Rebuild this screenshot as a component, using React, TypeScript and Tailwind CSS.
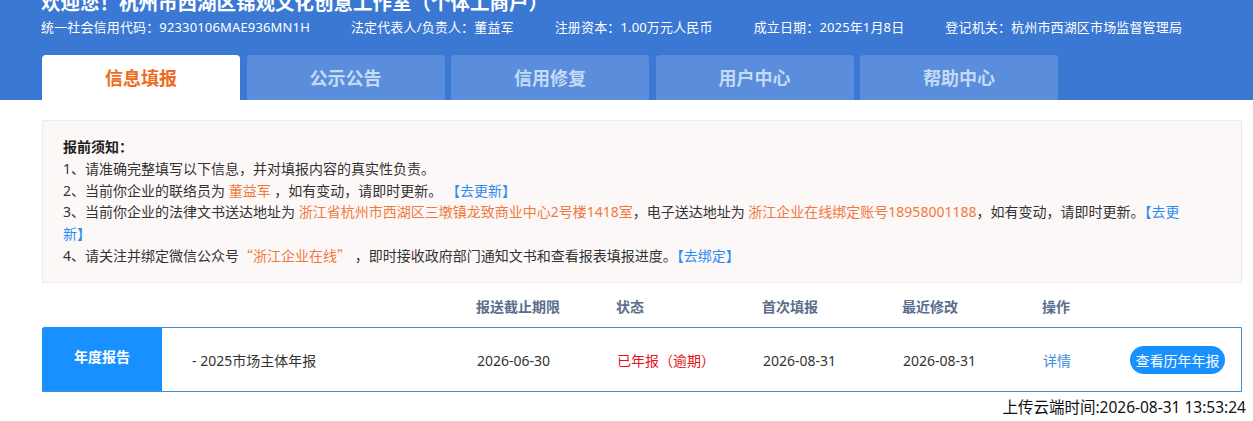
const orange = 'text-[#ef7a3f]'
const link = 'text-[#2d8cf0]'
const cjk = "font-['Noto_Sans_CJK_SC']"

const infoItems = [
  '统一社会信用代码：92330106MAE936MN1H',
  '法定代表人/负责人：董益军',
  '注册资本：1.00万元人民币',
  '成立日期：2025年1月8日',
  '登记机关：杭州市西湖区市场监督管理局',
]

const tabs = ['信息填报', '公示公告', '信用修复', '用户中心', '帮助中心']

const Header = () => (
  <div className="bg-[#3a78d3] h-[100px] pl-[41px] flex flex-col overflow-hidden">
    <div className="mt-[-7px] text-white font-bold text-[19.5px] leading-[20px] whitespace-nowrap">
      欢迎您！杭州市西湖区锦观文化创意工作室（个体工商户）
    </div>
    <div className="mt-[4px] flex text-white text-[13px] leading-[20px] whitespace-nowrap">
      {infoItems.map((t) => (
        <span key={t} className="mr-[41px] tracking-[0.15px]">{t}</span>
      ))}
    </div>
    <div className="mt-[18px] ml-[1px] flex gap-[6.5px]">
      {tabs.map((t, i) => (
        <div
          key={t}
          className={`w-[198px] h-[45px] pt-[2px] rounded-t-[4px] flex items-center justify-center text-[18px] font-bold ${
            i === 0 ? 'bg-white text-[#f26a1b]' : 'bg-[#5a8ddb] text-[#c4dbf6]'
          }`}
        >
          {t}
        </div>
      ))}
    </div>
  </div>
)

const Notice = () => (
  <div className="mt-[20px] border border-[#efe9e9] bg-[#fdf8f8] pl-[20px] pr-[40px] py-[15px] text-[14px] leading-[21.8px] text-[#333]">
    <p className="font-bold text-[#222]">报前须知：</p>
    <p>1、请准确完整填写以下信息，并对填报内容的真实性负责。</p>
    <p>
      2、当前你企业的联络员为 <span className={orange}>董益军</span> ，如有变动，请即时更新。 <span className={link}>【去更新】</span>
    </p>
    <p>
      3、当前你企业的法律文书送达地址为 <span className={orange}>浙江省杭州市西湖区三墩镇龙致商业中心2号楼1418室</span>，电子送达地址为{' '}
      <span className={orange}>浙江企业在线绑定账号18958001188</span>，如有变动，请即时更新。<span className={link}>【去更<br />新】</span>
    </p>
    <p>
      4、请关注并绑定微信公众号<span className={`${orange} ${cjk}`}>“浙江企业在线”</span> ，即时接收政府部门通知文书和查看报表填报进度。<span className={link}>【去绑定】</span>
    </p>
  </div>
)

const cols = ['报送截止期限', '状态', '首次填报', '最近修改', '操作']
const colWidths = ['w-[140px]', 'w-[146px]', 'w-[140px]', 'w-[140px]', 'w-[87px]']

const ReportTable = () => (
  <div>
    <div className="h-[44px] flex items-end pb-[10px] text-[14px] leading-[20px] font-bold text-[#5b6e8b]">
      <div className="w-[434px]" />
      {cols.map((c, i) => (
        <div key={c} className={colWidths[i]}>{c}</div>
      ))}
    </div>
    <div className="h-[65px] border border-[#3f8fd3] rounded-tl-[3px] flex text-[14px] text-[#333]">
      <div className="w-[120px] -ml-px -mt-px h-[64px] bg-[#1890ff] rounded-tl-[3px] flex items-center justify-center pb-[4px] text-white text-[14px] font-bold">
        年度报告
      </div>
      <div className="flex items-center pt-[2px]">
        <div className="w-[315px] pl-[30px]">- 2025市场主体年报</div>
        <div className={colWidths[0]}>2026-06-30</div>
        <div className={`${colWidths[1]} text-[#e5111b]`}>已年报（逾期）</div>
        <div className={colWidths[2]}>2026-08-31</div>
        <div className={colWidths[3]}>2026-08-31</div>
        <div className={`${colWidths[4]} text-[#3b8de0]`}>详情</div>
        <div className="w-[95px] h-[28px] rounded-full bg-[#1890ff] text-white flex items-center justify-center">
          查看历年年报
        </div>
      </div>
    </div>
  </div>
)

export default function App() {
  return (
    <div
      className="w-[1253px] h-[421px] bg-white overflow-hidden"
      style={{ fontFamily: '"Noto Sans", "Noto Sans CJK SC", sans-serif' }}
    >
      <Header />
      <div className="ml-[42px] w-[1200px]">
        <Notice />
        <ReportTable />
        <div className="w-[1204px] mt-[5px] text-right text-[15.5px] leading-[20px] text-[#111]">
          上传云端时间:2026-08-31 13:53:24
        </div>
      </div>
    </div>
  )
}
